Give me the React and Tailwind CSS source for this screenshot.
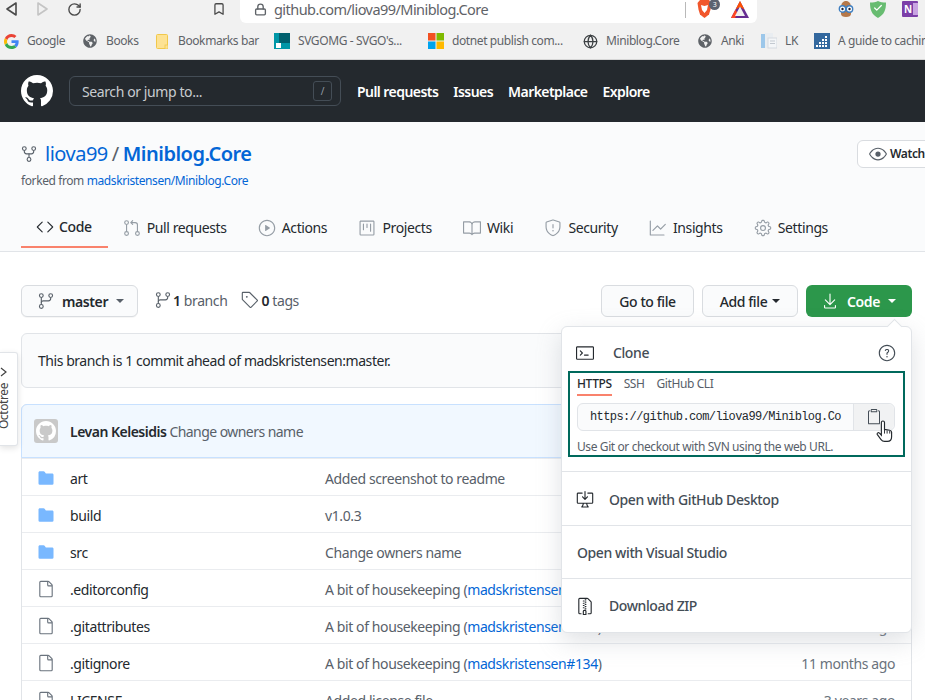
import React from "react";
import { RotateCw, Bookmark, Lock, Globe, Check } from "lucide-react";
import { FaGlobeAmericas } from "react-icons/fa";
import { BsGithub } from "react-icons/bs";
import {
  GoRepoForked, GoCode, GoGitPullRequest, GoPlay, GoProject, GoBook, GoShield, GoGraph, GoGear,
  GoGitBranch, GoTag, GoEye, GoDownload, GoTerminal, GoQuestion, GoDesktopDownload, GoFileZip,
  GoFile, GoFileDirectoryFill, GoPaste,
} from "react-icons/go";

const GoogleIcon = () => (
  <svg width="15" height="15" viewBox="0 0 48 48">
    <path fill="#EA4335" d="M24 9.5c3.5 0 6.700 1.200 9.100 3.600l6.800-6.800C35.800 2.500 30.300 0 24 0 14.600 0 6.500 5.400 2.600 13.200l7.900 6.200C12.400 13.600 17.700 9.500 24 9.500z" />
    <path fill="#4285F4" d="M46.900 24.500c0-1.600-.1-3.100-.4-4.500H24v9h12.900c-.6 3-2.200 5.500-4.700 7.200l7.600 5.900c4.400-4.100 7.100-10.200 7.100-17.600z" />
    <path fill="#FBBC05" d="M10.500 28.600A14.500 14.500 0 0 1 10.500 19.400l-7.900-6.200a24 24 0 0 0 0 21.600l7.900-6.200z" />
    <path fill="#34A853" d="M24 48c6.500 0 11.900-2.100 15.800-5.900l-7.600-5.900c-2.100 1.400-4.900 2.300-8.200 2.300-6.300 0-11.600-4.200-13.500-9.900l-7.900 6.200C6.500 42.600 14.600 48 24 48z" />
  </svg>
);

const YellowFolder = () => (
  <svg width="12" height="15" viewBox="0 0 12 15">
    <rect x="0.500" y="0.500" width="11" height="14" rx="1" fill="#fde293" stroke="#f1c84b" />
    <rect x="9" y="11" width="3" height="4" fill="#fde293" stroke="#f1c84b" strokeWidth="0.800" />
  </svg>
);

const SvgomgIcon = () => (
  <svg width="16" height="16" viewBox="0 0 16 16">
    <rect width="16" height="16" fill="#0097a7" />
    <rect x="5" y="0" width="11" height="10" fill="#00606e" />
    <rect x="2" y="10" width="5" height="5" fill="#fff" />
  </svg>
);

const MsIcon = () => (
  <svg width="16" height="16" viewBox="0 0 16 16">
    <rect width="7.500" height="7.500" fill="#f25022" />
    <rect x="8.500" width="7.500" height="7.500" fill="#7fba00" />
    <rect y="8.500" width="7.500" height="7.500" fill="#00a4ef" />
    <rect x="8.500" y="8.500" width="7.500" height="7.500" fill="#ffb900" />
  </svg>
);

const DocIcon = () => (
  <svg width="16" height="16" viewBox="0 0 16 16">
    <rect x="0" y="1" width="4" height="14" fill="#9cc7ea" />
    <rect x="4" y="0" width="8" height="15" fill="#e9edf1" />
    <rect x="7" y="5" width="9" height="10" fill="#f4f6f8" stroke="#d5dae0" />
    <path d="M9 8h5M9 10.500h5" stroke="#c3c9d0" />
  </svg>
);

const GuideIcon = () => (
  <svg width="16" height="16" viewBox="0 0 16 16">
    <rect width="16" height="16" fill="#33689e" />
    <path d="M2 12h2v2H2zM5 12h2v2H5zM8 12h2v2H8zM11 12h2v2h-2zM5 9h2v2H5zM8 9h2v2H8zM11 9h2v2h-2zM8 6h2v2H8zM11 6h2v2h-2zM11 3h2v2h-2z" fill="#fff" />
  </svg>
);

const BraveIcon = () => (
  <svg width="15" height="18" viewBox="0 0 15 18">
    <path d="M3 0h9l2.500 3-1 6.500-1.500 5L7.500 18 3 14.500 1.500 9.500.5 3z" fill="#f1562b" />
    <path d="M4 5l3.500 1L11 5l-1 5-2.500 3L5 10z" fill="#fff" />
  </svg>
);

const BatIcon = () => (
  <svg width="18" height="17" viewBox="0 0 18 17">
    <path d="M9 0l9 17H0z" fill="#662d91" />
    <path d="M9 0l4.500 8.500L9 6 4.500 8.500z" fill="#ff5000" />
    <path d="M0 17l4.500-8.500 2 4L4 17z" fill="#ff4724" />
    <path d="M9 5.500l5 9.500H4z" fill="#f1f1f1" />
  </svg>
);

const OwlIcon = () => (
  <svg width="16" height="16" viewBox="0 0 16 16">
    <path d="M3 7C3 2 5 0 8 0s5 2 5 7v6c0 2-2 3-5 3s-5-1-5-3z" fill="#b5784a" />
    <circle cx="4.500" cy="8" r="3.200" fill="#fff" stroke="#3f7fc1" strokeWidth="1.400" />
    <circle cx="11.500" cy="8" r="3.200" fill="#fff" stroke="#3f7fc1" strokeWidth="1.400" />
    <circle cx="4.500" cy="8" r="1.200" fill="#223" />
    <circle cx="11.500" cy="8" r="1.200" fill="#223" />
  </svg>
);

const GuardIcon = () => (
  <div className="relative w-[16px] h-[17px]">
    <svg width="16" height="17" viewBox="0 0 16 17">
      <path d="M8 0c2 1 5 1.500 8 1.500 0 7-1.500 12-8 15.500C1.500 13.500 0 8.500 0 1.500 3 1.500 6 1 8 0z" fill="#68bc71" />
    </svg>
    <Check className="absolute left-[3px] top-[2px] text-white" size={10} strokeWidth={3} />
  </div>
);

const OneNoteIcon = () => (
  <div className="relative w-[16px] h-[16px] bg-[#7b3fa8] rounded-[1px] flex items-center pl-[2px] text-[10px] font-bold text-white leading-none">
    N
    <div className="absolute right-0 top-[2px] w-[5px] h-[12px] bg-[#c9a4e2]" />
  </div>
);

const bookmarks = [
  { icon: <GoogleIcon />, label: "Google", cls: "w-[79px] gap-[8px]" },
  { icon: <FaGlobeAmericas size={14} className="text-[#5f6368]" />, label: "Books", cls: "w-[73px] gap-[9px]" },
  { icon: <YellowFolder />, label: "Bookmarks bar", cls: "w-[118px] gap-[10px]" },
  { icon: <SvgomgIcon />, label: "SVGOMG - SVGO's...", cls: "w-[154px] gap-[8px]" },
  { icon: <MsIcon />, label: "dotnet publish com...", cls: "w-[155px] gap-[8px]" },
  { icon: <Globe size={15} className="text-[#3c4043]" />, label: "Miniblog.Core", cls: "w-[115px] gap-[8px]" },
  { icon: <FaGlobeAmericas size={14} className="text-[#5f6368]" />, label: "Anki", cls: "w-[63px] gap-[9px]" },
  { icon: <DocIcon />, label: "LK", cls: "w-[53px] gap-[8px]" },
  { icon: <GuideIcon />, label: "A guide to caching", cls: "gap-[8px]" },
];

const tabs = [
  { icon: GoGitPullRequest, label: "Pull requests" },
  { icon: GoPlay, label: "Actions" },
  { icon: GoProject, label: "Projects" },
  { icon: GoBook, label: "Wiki" },
  { icon: GoShield, label: "Security" },
  { icon: GoGraph, label: "Insights" },
  { icon: GoGear, label: "Settings" },
];

const files = [
  { dir: true, name: "art", msg: "Added screenshot to readme", time: "3 years ago" },
  { dir: true, name: "build", msg: "v1.0.3", time: "3 years ago" },
  { dir: true, name: "src", msg: "Change owners name", time: "2 months ago" },
  { name: ".editorconfig", msg: "A bit of housekeeping (", link: "madskristensen#134", time: "11 months ago" },
  { name: ".gitattributes", msg: "A bit of housekeeping (", link: "madskristensen#134", time: "11 months ago" },
  { name: ".gitignore", msg: "A bit of housekeeping (", link: "madskristensen#134", time: "11 months ago" },
  { name: "LICENSE", msg: "Added license file", time: "3 years ago" },
];

// the go icons are drawn on a 24 grid with some air around them, so 18px gives the 16px look
function Ico({ as: Icon, cls }) {
  return <Icon size={18} className={`-m-px shrink-0 ${cls || ""}`} />;
}

function Caret({ cls }) {
  return <span className={`inline-block w-0 h-0 border-x-[4px] border-x-transparent border-t-[4px] ${cls}`} />;
}

function BrowserBar() {
  return (
    <div className="bg-[#f1f1f1] border-b border-[#d6d6d6] h-[60px] text-[#5f6368]">
      <div className="h-[23px] flex items-start">
        <div className="w-[240px] h-[18px] flex items-center relative">
          <svg className="ml-[6px]" width="11" height="14" viewBox="0 0 11 14"><path d="M10 1v12L1 7z" fill="none" stroke="#4a4a4a" strokeWidth="1.600" strokeLinejoin="round" /></svg>
          <svg className="ml-[20px]" width="11" height="14" viewBox="0 0 11 14"><path d="M1 1v12l9-6z" fill="none" stroke="#c4c4c4" strokeWidth="1.600" strokeLinejoin="round" /></svg>
          <RotateCw className="ml-[19px] text-[#4a4a4a]" size={15} strokeWidth={2.200} />
          <Bookmark className="ml-[130px] text-[#4a4a4a]" size={14} strokeWidth={2.200} />
        </div>
        <div className="w-[517px] h-[23px] bg-white rounded-b-[6px] flex items-center pl-[14px] pb-[4px]">
          <Lock size={13} strokeWidth={2.500} className="text-[#5f6368]" />
          <span className="ml-[7px] text-[14.500px] tracking-[-0.550px] text-[#5f6368] leading-none">github.com/liova99/Miniblog.Core</span>
          <div className="ml-auto mr-[71px] w-px h-[16px] bg-[#b9b9b9]" />
          <div className="absolute left-[697px] top-0 flex items-center h-[18px]">
            <BraveIcon />
            <span className="absolute left-[12px] -top-[1px] w-[11px] h-[11px] rounded-full bg-[#5c6270] text-white text-[7px] leading-[11px] text-center">3</span>
            <div className="ml-[19px]"><BatIcon /></div>
          </div>
        </div>
        <div className="flex-1 h-[18px] flex items-center pl-[81px] gap-[16px]">
          <OwlIcon />
          <GuardIcon />
          <OneNoteIcon />
        </div>
      </div>
      <div className="h-[36px] flex items-center pl-[4px] text-[12px] text-[#5f6368] whitespace-nowrap overflow-hidden">
        {bookmarks.map((b) => (
          <div key={b.label} className={`flex items-center shrink-0 ${b.cls}`}>
            {b.icon}
            <span>{b.label}</span>
          </div>
        ))}
      </div>
    </div>
  );
}

function TopNav() {
  return (
    <header className="h-[62px] bg-[#24292e] flex items-center pl-[21px] text-white">
      <BsGithub size={32} />
      <div className="ml-[16px] w-[272px] h-[30px] border border-[#444d56] rounded-[6px] flex items-center justify-between pl-[12px] pr-[8px]">
        <span className="text-[14px] text-[#c8ccd0]">Search or jump to...</span>
        <span className="w-[19px] h-[20px] border border-[#444d56] rounded-[3px] text-[10px] text-[#959da5] flex items-center justify-center">/</span>
      </div>
      <nav className="ml-[16px] flex items-center gap-[15px] text-[14px] font-semibold tracking-[-0.550px]">
        <a>Pull requests</a>
        <a>Issues</a>
        <a>Marketplace</a>
        <a>Explore</a>
      </nav>
    </header>
  );
}

function RepoHead() {
  return (
    <div className="h-[130px] bg-[#fafbfc] border-b border-[#e1e4e8] overflow-hidden">
      <div className="flex justify-between pl-[21px] pt-[18px]">
        <div>
          <div className="h-[28px] flex items-center text-[20px] tracking-[-0.500px] text-[#0366d6]">
            <Ico as={GoRepoForked} cls="text-[#586069] mr-[7px]" />
            <a>liova99</a>
            <span className="mx-[4px] text-[#586069]">/</span>
            <a className="font-semibold">Miniblog.Core</a>
          </div>
          <div className="mt-[4px] text-[12px] leading-[18px] text-[#586069]">
            forked from <a className="text-[#0366d6]">madskristensen/Miniblog.Core</a>
          </div>
        </div>
        <div className="h-[28px] w-[80px] -mr-[12px] shrink-0 border border-[#d9dce0] rounded-[6px] bg-white flex items-center gap-[4px] pl-[12px] text-[12px] font-semibold text-[#24292e]">
          <Ico as={GoEye} cls="text-[#586069]" />
          Watch
        </div>
      </div>
      <div className="mt-[18px] pl-[21px] flex text-[14px] text-[#24292e] leading-[20px]">
        <div className="h-[40px] px-[16px] flex items-center gap-[6px] border-b-2 border-[#f9826c] font-medium">
          <Ico as={GoCode} />
          Code
        </div>
        {tabs.map((t) => (
          <div key={t.label} className="h-[40px] px-[16.150px] flex items-center gap-[7px]">
            <Ico as={t.icon} cls="text-[#959da5]" />
            {t.label}
          </div>
        ))}
      </div>
    </div>
  );
}

function Toolbar() {
  return (
    <div className="h-[32px] flex items-center text-[14px]">
      <div className="w-[117px] h-[32px] border border-[#d9dce0] rounded-[6px] bg-[#fafbfc] shadow-[0_1px_0_rgba(27,31,35,0.04)] flex items-center pl-[16px] font-semibold text-[#24292e]">
        <Ico as={GoGitBranch} cls="text-[#586069]" />
        <span className="ml-[8px]">master</span>
        <Caret cls="ml-[8px] border-t-[#586069]" />
      </div>
      <div className="ml-[17px] pb-[2px] flex items-center gap-[1px] text-[#586069]">
        <Ico as={GoGitBranch} />
        <span className="ml-[1px]"><b className="font-semibold text-[#24292e]">1</b> branch</span>
      </div>
      <div className="ml-[15px] pb-[2px] flex items-center gap-[2px] text-[#586069]">
        <Ico as={GoTag} />
        <span className="ml-[1px]"><b className="font-semibold text-[#24292e]">0</b> tags</span>
      </div>
      <div className="ml-auto flex items-center gap-[8px] font-medium text-[#24292e]">
        <div className="w-[93px] h-[32px] border border-[#d9dce0] rounded-[6px] bg-[#fafbfc] flex items-center justify-center">Go to file</div>
        <div className="w-[96px] h-[32px] border border-[#d9dce0] rounded-[6px] bg-[#fafbfc] flex items-center justify-center gap-[5px]">
          Add file
          <Caret cls="border-t-[#24292e]" />
        </div>
        <div className="w-[106px] h-[32px] rounded-[6px] bg-[#2c974b] text-white font-semibold flex items-center justify-center">
          <Ico as={GoDownload} />
          <span className="ml-[9px]">Code</span>
          <Caret cls="ml-[8px] border-t-white" />
        </div>
      </div>
    </div>
  );
}

function FileRow({ f }) {
  return (
    <div className="h-[37px] pt-[2px] border-t border-[#eaecef] flex items-center px-[16px] text-[14px]">
      {f.dir
        ? <Ico as={GoFileDirectoryFill} cls="text-[#79b8ff]" />
        : <Ico as={GoFile} cls="text-[#6a737d]" />}
      <span className="ml-[16px] w-[255px] shrink-0 text-[#24292e]">{f.name}</span>
      <span className="text-[#586069]">
        {f.msg}
        {f.link && <><a className="text-[#0366d6]">{f.link}</a>)</>}
      </span>
      <span className="ml-auto text-[#6a737d]">{f.time}</span>
    </div>
  );
}

function CloneMenu() {
  return (
    <div className="absolute left-[561px] top-[326px] z-10 w-[351px] h-[307px] bg-white border border-[#e1e4e8] rounded-[6px] shadow-[0_8px_24px_rgba(149,157,165,0.3)] text-[14px] text-[#24292e]">
      <div className="absolute -top-[6px] right-[11px] w-[11px] h-[11px] rotate-45 bg-white border-l border-t border-[#e1e4e8]" />
      <div className="h-[44px] pt-[7px] pl-[15px] pr-[16px] flex items-center">
        <Ico as={GoTerminal} />
        <span className="ml-[20px] font-medium text-[#444d56]">Clone</span>
        <Ico as={GoQuestion} cls="ml-auto text-[#444d56]" />
      </div>
      <div className="mx-[6px] h-[86px] border-2 border-[#00695c] px-[7px] pt-[2px]">
        <div className="flex gap-[12px] text-[12px] text-[#586069] leading-[18px]">
          <span className="border-b-2 border-[#f9826c] pb-[1px] font-medium text-[#24292e]">HTTPS</span>
          <span>SSH</span>
          <span>GitHub CLI</span>
        </div>
        <div className="mt-[7px] w-[318px] h-[28px] border border-[#e1e4e8] rounded-[6px] bg-[#fafbfc] flex">
          <div className="flex-1 pl-[12px] flex items-center text-[12px] tracking-[-0.600px] text-[#24292e] [font-family:'Liberation_Mono',monospace] overflow-hidden whitespace-nowrap">
            https://github.com/liova99/Miniblog.Co
          </div>
          <div className="relative w-[41px] shrink-0 border-l border-[#e1e4e8] bg-[#f1f2f3] rounded-r-[6px] pb-[1px] flex items-center justify-center text-[#444d56]">
            <GoPaste size={16} />
            <svg className="absolute left-[22px] top-[16px]" width="17" height="23" viewBox="0 0 16 22">
              <path d="M5 2.500a1.500 1.500 0 0 1 3 0V9l5 .8c1 .2 1.800 1 1.800 2V16c0 2.500-1.500 4.500-4 4.500H8c-1.500 0-2.500-.7-3.300-1.800L1.200 14c-.8-1.200 1-2.700 2-1.500L5 14.500z" fill="#fff" stroke="#24292e" strokeWidth="1.100" />
              <path d="M8 9.500V13M10.500 10v3M13 10.500V13" stroke="#24292e" strokeWidth="0.900" />
            </svg>
          </div>
        </div>
        <p className="mt-[7px] text-[12px] leading-[18px] text-[#586069]">Use Git or checkout with SVN using the web URL.</p>
      </div>
      <div className="mt-[14px] border-t border-[#e1e4e8] h-[54px] pt-[2px] pl-[15px] flex items-center font-medium text-[#444d56]">
        <Ico as={GoDesktopDownload} cls="text-[#24292e]" />
        <span className="ml-[16px]">Open with GitHub Desktop</span>
      </div>
      <div className="border-t border-[#e1e4e8] h-[53px] pl-[15px] flex items-center font-medium text-[#444d56]">Open with Visual Studio</div>
      <div className="border-t border-[#e1e4e8] h-[54px] pl-[15px] flex items-center font-medium text-[#444d56]">
        <Ico as={GoFileZip} cls="text-[#24292e]" />
        <span className="ml-[16px]">Download ZIP</span>
      </div>
    </div>
  );
}

export default function App() {
  return (
    <div className="relative w-[925px] h-[700px] overflow-hidden bg-white tracking-[-0.400px] [font-family:'Noto_Sans',sans-serif]">
      <BrowserBar />
      <TopNav />
      <RepoHead />
      <main className="pl-[21px] pr-[13px] pt-[33px]">
        <Toolbar />
        <div className="mt-[16px] h-[55px] border border-[#e1e4e8] rounded-[6px] bg-[#fafbfc] flex items-center pl-[16px] text-[14px] tracking-[-0.450px] text-[#24292e]">
          This branch is 1 commit ahead of madskristensen:master.
        </div>
        <div className="mt-[16px] border border-[#e1e4e8] rounded-t-[6px]">
          <div className="h-[54px] -m-px mb-0 border border-[#c8e1ff] rounded-t-[6px] bg-[#f1f8ff] flex items-center pl-[12px] text-[14px] text-[#586069]">
            <div className="w-[24px] h-[24px] rounded-[3px] bg-[#c9c9c9] flex items-center justify-center">
              <BsGithub size={20} className="text-white" />
            </div>
            <span className="ml-[12px] font-semibold text-[#24292e] tracking-[-0.500px]">Levan Kelesidis</span>
            <span className="ml-[3px] tracking-[-0.550px]">Change owners name</span>
          </div>
          {files.map((f) => <FileRow key={f.name} f={f} />)}
        </div>
      </main>
      <CloneMenu />
      <div className="absolute left-0 top-[352px] w-[18px] h-[94px] bg-white border border-l-0 border-[#e1e4e8] rounded-r-[3px] shadow-[0_2px_6px_rgba(0,0,0,0.12)] flex flex-col items-start overflow-hidden">
        <svg className="mt-[14px]" width="7" height="10" viewBox="0 0 7 10"><path d="M1 1l5 4-5 4" fill="none" stroke="#444" strokeWidth="1.200" /></svg>
        <span className="mt-[6px] -ml-[3px] text-[12px] leading-[14px] text-[#444] [writing-mode:vertical-rl] rotate-180">Octotree</span>
      </div>
    </div>
  );
}
